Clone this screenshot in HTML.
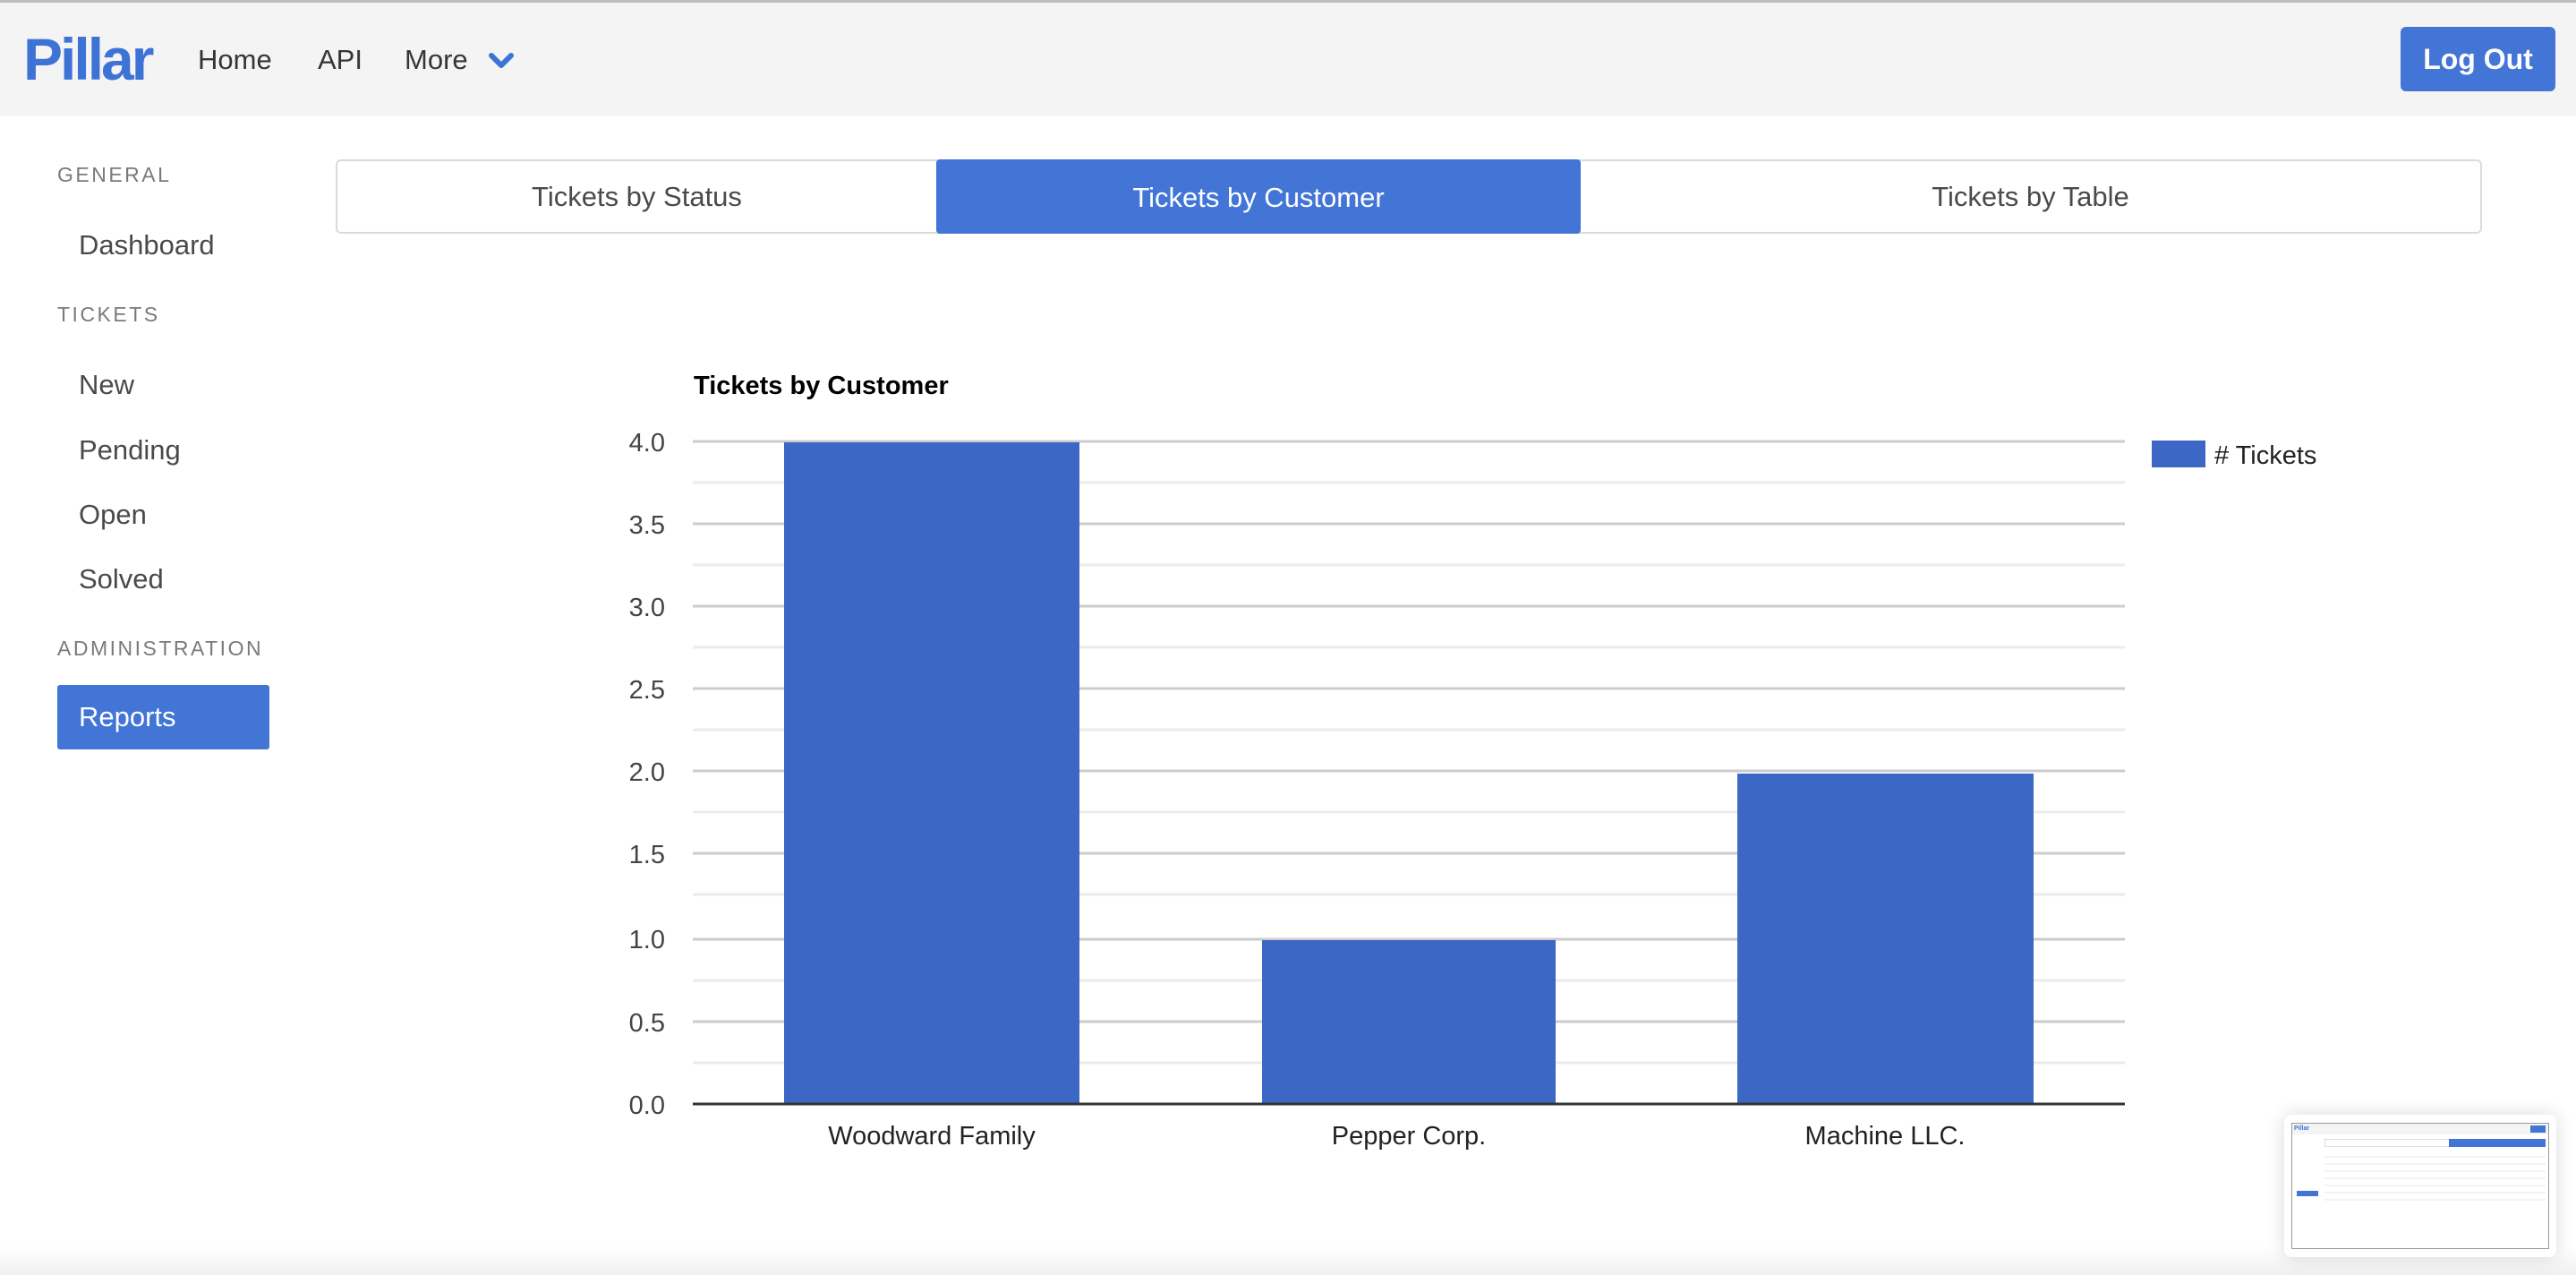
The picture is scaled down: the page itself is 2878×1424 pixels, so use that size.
<!DOCTYPE html>
<html><head><meta charset="utf-8"><style>
*{margin:0;padding:0;box-sizing:border-box}
body{width:2878px;height:1424px;background:#fff;font-family:"Liberation Sans",sans-serif;position:relative;overflow:hidden;color:#363636}
.hdr{position:absolute;left:0;top:0;width:2878px;height:130px;background:#f4f4f4;border-top:3px solid #bdbdbd}
.abs{position:absolute;white-space:nowrap}
.logo{left:26px;top:28px;font-size:66px;font-weight:bold;color:#3e73d6;letter-spacing:-3px}
.nav{font-size:31px;color:#363636;top:49px}
.btn{left:2682px;top:30px;width:173px;height:72px;background:#4275d6;border-radius:6px;color:#fff;font-weight:bold;font-size:32px;text-align:center;line-height:72px}
.lab{font-size:23px;letter-spacing:2.5px;color:#7a7a7a;left:64px}
.item{font-size:31px;color:#4a4a4a;left:88px}
.rep{left:64px;top:765px;width:237px;height:72px;background:#4275d6;border-radius:3px;color:#fff;font-size:31px;line-height:72px;padding-left:24px}
.tabs{position:absolute;left:375px;top:178px;width:2398px;height:83px;border:2px solid #dbdbdb;border-radius:6px;display:flex}
.tab{font-size:31px;color:#4a4a4a;text-align:center;line-height:79px}
.act{background:#4275d6;color:#fff;border-radius:4px;margin:-2px 0;line-height:85px}
</style></head><body>
<div class="hdr"></div>
<div class="abs logo">Pillar</div>
<div class="abs nav" style="left:221px">Home</div>
<div class="abs nav" style="left:355px">API</div>
<div class="abs nav" style="left:452px">More</div>
<svg class="abs" style="left:546px;top:58px" width="28" height="20" viewBox="0 0 28 20"><path d="M3 4 L14 15 L25 4" stroke="#3e73d6" stroke-width="6" fill="none" stroke-linecap="round" stroke-linejoin="round"/></svg>
<div class="abs btn">Log Out</div>

<div class="abs lab" style="top:182px">GENERAL</div>
<div class="abs item" style="top:256px">Dashboard</div>
<div class="abs lab" style="top:338px">TICKETS</div>
<div class="abs item" style="top:412px">New</div>
<div class="abs item" style="top:485px">Pending</div>
<div class="abs item" style="top:557px">Open</div>
<div class="abs item" style="top:629px">Solved</div>
<div class="abs lab" style="top:711px">ADMINISTRATION</div>
<div class="abs rep">Reports</div>

<div class="tabs">
<div class="tab" style="width:669px">Tickets by Status</div>
<div class="tab act" style="width:720px">Tickets by Customer</div>
<div class="tab" style="flex:1">Tickets by Table</div>
</div>

<svg class="abs" style="left:0;top:0" width="2878" height="1424">
<text x="775" y="440" font-family="Liberation Sans" font-weight="bold" font-size="29" fill="#000">Tickets by Customer</text>
<g stroke-width="3">
<line x1="774" x2="2374" y1="539" y2="539" stroke="#ebebeb"/>
<line x1="774" x2="2374" y1="631" y2="631" stroke="#ebebeb"/>
<line x1="774" x2="2374" y1="723" y2="723" stroke="#ebebeb"/>
<line x1="774" x2="2374" y1="815" y2="815" stroke="#ebebeb"/>
<line x1="774" x2="2374" y1="907" y2="907" stroke="#ebebeb"/>
<line x1="774" x2="2374" y1="999" y2="999" stroke="#ebebeb"/>
<line x1="774" x2="2374" y1="1095" y2="1095" stroke="#ebebeb"/>
<line x1="774" x2="2374" y1="1187" y2="1187" stroke="#ebebeb"/>
<line x1="774" x2="2374" y1="493" y2="493" stroke="#ccc"/>
<line x1="774" x2="2374" y1="585" y2="585" stroke="#ccc"/>
<line x1="774" x2="2374" y1="677" y2="677" stroke="#ccc"/>
<line x1="774" x2="2374" y1="769" y2="769" stroke="#ccc"/>
<line x1="774" x2="2374" y1="861" y2="861" stroke="#ccc"/>
<line x1="774" x2="2374" y1="953" y2="953" stroke="#ccc"/>
<line x1="774" x2="2374" y1="1049" y2="1049" stroke="#ccc"/>
<line x1="774" x2="2374" y1="1141" y2="1141" stroke="#ccc"/>
</g>
<rect x="876" y="494" width="330" height="739" fill="#3c67c5"/>
<rect x="1410" y="1050" width="328" height="183" fill="#3c67c5"/>
<rect x="1941" y="864" width="331" height="369" fill="#3c67c5"/>
<line x1="774" x2="2374" y1="1233" y2="1233" stroke="#333" stroke-width="3"/>
<g font-family="Liberation Sans" font-size="29" fill="#444" text-anchor="end">
<text x="743" y="504">4.0</text><text x="743" y="596">3.5</text><text x="743" y="688">3.0</text><text x="743" y="780">2.5</text><text x="743" y="872">2.0</text><text x="743" y="964">1.5</text><text x="743" y="1059">1.0</text><text x="743" y="1152">0.5</text><text x="743" y="1244">0.0</text>
</g>
<g font-family="Liberation Sans" font-size="29" fill="#222" text-anchor="middle">
<text x="1041" y="1278">Woodward Family</text><text x="1574" y="1278">Pepper Corp.</text><text x="2106" y="1278">Machine LLC.</text>
</g>
<rect x="2404" y="492" width="60" height="30" fill="#3c67c5"/>
<text x="2474" y="518" font-family="Liberation Sans" font-size="29" fill="#222"># Tickets</text>
</svg>

<div class="abs" style="left:0;top:1392px;width:2878px;height:32px;background:linear-gradient(#fff,#f0f0f0)"></div>
<div class="abs" style="left:2552px;top:1245px;width:304px;height:159px;background:#fff;border-radius:8px;box-shadow:0 0 20px rgba(0,0,0,.15)">
 <div style="position:absolute;left:8px;top:9px;width:288px;height:141px;border:1px solid #999;background:#fff">
  <div style="height:12px;background:#f4f4f4"></div>
  <div style="position:absolute;left:2px;top:2px;font-size:7px;font-weight:bold;color:#3e73d6">Pillar</div>
  <div style="position:absolute;right:3px;top:2px;width:17px;height:8px;background:#4275d6"></div>
  <div style="position:absolute;left:36px;top:17px;width:247px;height:9px;border:1px solid #ddd"></div>
  <div style="position:absolute;left:175px;top:17px;width:108px;height:9px;background:#4275d6"></div>
  <div style="position:absolute;left:5px;top:75px;width:24px;height:6px;background:#4275d6"></div>
  <div style="position:absolute;left:36px;top:30px;width:247px;height:60px;background:repeating-linear-gradient(#fff 0,#fff 6px,#f3f3f3 6px,#f3f3f3 8px)"></div>
 </div>
</div>
</body></html>
